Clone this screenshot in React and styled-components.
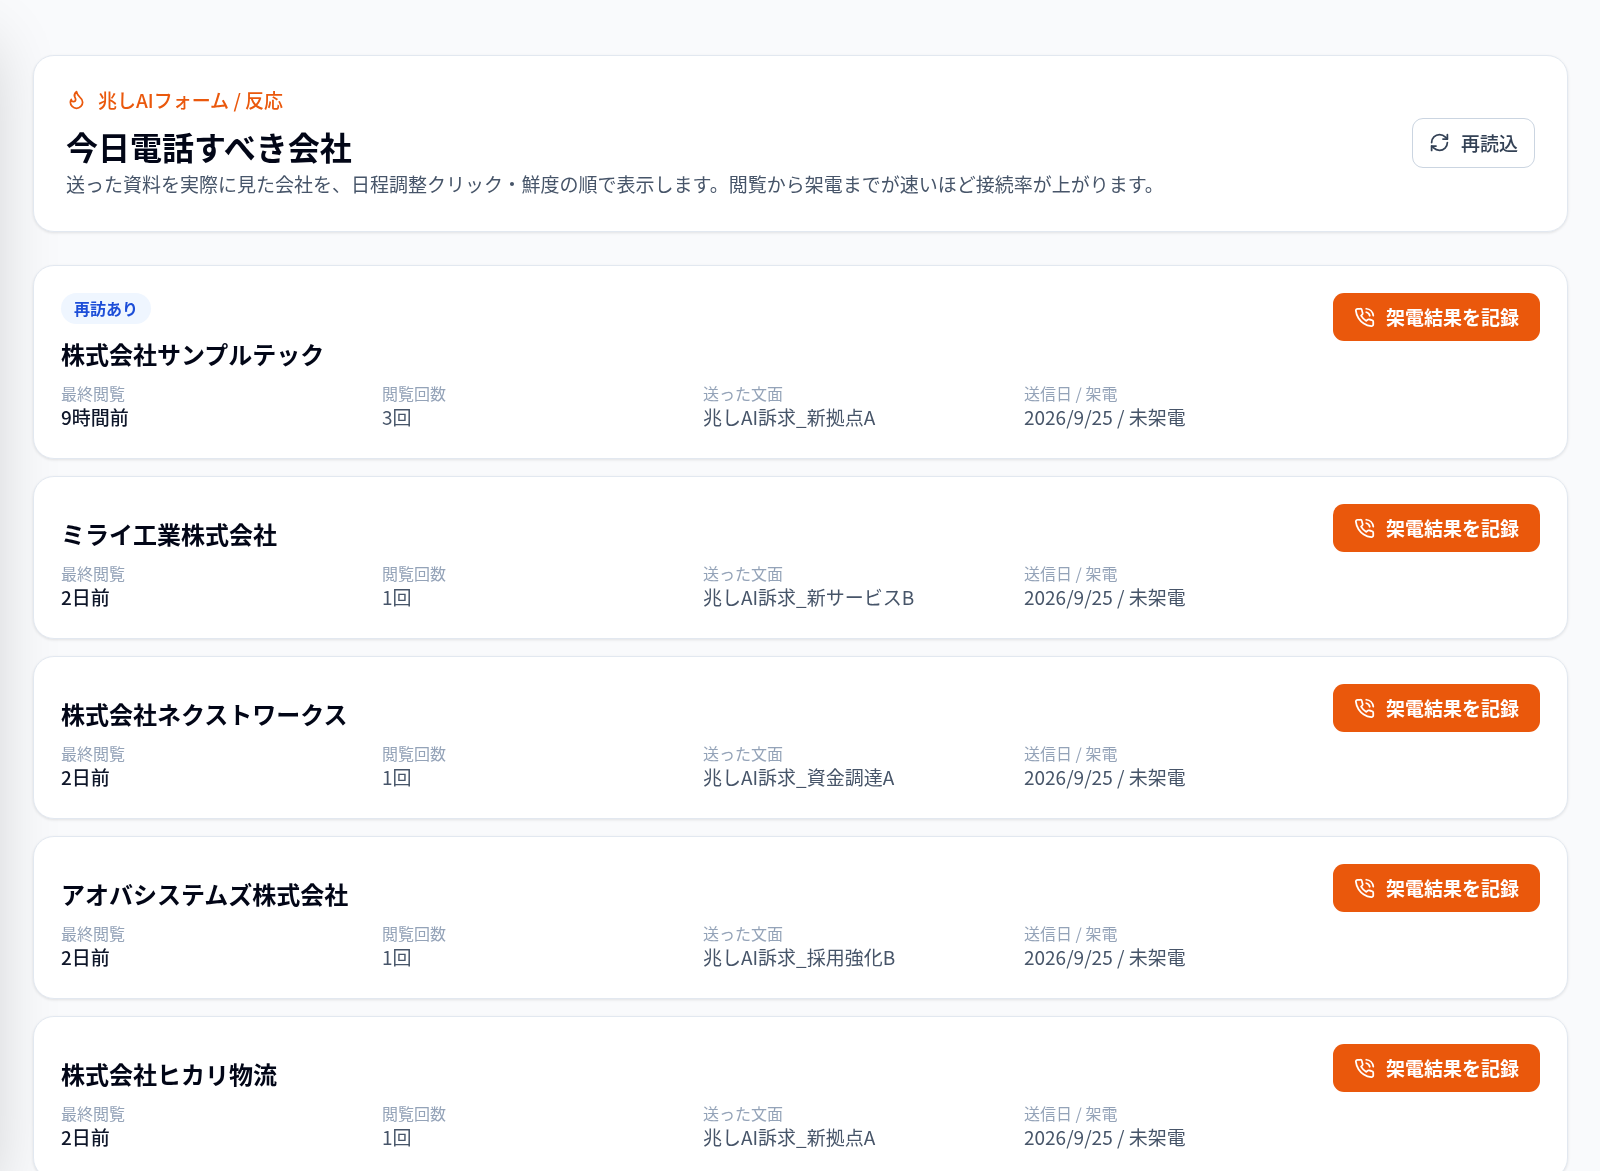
import React from 'react'
import styled, { createGlobalStyle } from 'styled-components'
import { RefreshCw } from 'lucide-react'

const companies = [
    { name: '株式会社サンプルテック', revisit: true, lastView: '9時間前', views: 3, template: '兆しAI訴求_新拠点A' },
    { name: 'ミライ工業株式会社', lastView: '2日前', views: 1, template: '兆しAI訴求_新サービスB' },
    { name: '株式会社ネクストワークス', lastView: '2日前', views: 1, template: '兆しAI訴求_資金調達A' },
    { name: 'アオバシステムズ株式会社', lastView: '2日前', views: 1, template: '兆しAI訴求_採用強化B' },
    { name: '株式会社ヒカリ物流', lastView: '2日前', views: 1, template: '兆しAI訴求_新拠点A' },
]

function FlameIcon() {
    return (
        <Icon viewBox="0 0 24 24" aria-hidden="true">
            <path d="M8.5 14.5A2.5 2.5 0 0 0 11 12c0-1.38-.5-2-1-3-1.072-2.143-.224-4.054 2-6 .5 2.5 2 4.9 4 6.5 2 1.6 3 3.5 3 5.5a7 7 0 1 1-14 0c0-1.153.433-2.294 1-3a2.5 2.5 0 0 0 2.5 2.5z" />
        </Icon>
    )
}

function PhoneCallIcon() {
    return (
        <Icon viewBox="0 0 24 24" aria-hidden="true">
            <path d="M22 16.92v3a2 2 0 0 1-2.18 2 19.79 19.79 0 0 1-8.63-3.07 19.5 19.5 0 0 1-6-6 19.79 19.79 0 0 1-3.07-8.67A2 2 0 0 1 4.11 2h3a2 2 0 0 1 2 1.72 12.84 12.84 0 0 0 .7 2.81 2 2 0 0 1-.45 2.11L8.09 9.91a16 16 0 0 0 6 6l1.27-1.27a2 2 0 0 1 2.11-.45 12.84 12.84 0 0 0 2.81.7A2 2 0 0 1 22 16.92z" />
            <path d="M14.05 2a9 9 0 0 1 8 7.94" />
            <path d="M14.05 6A5 5 0 0 1 18 10" />
        </Icon>
    )
}

function CompanyCard({ company }) {
    return (
        <Card>
            <CardBody>
                <Badges>{company.revisit && <Badge>再訪あり</Badge>}</Badges>
                <CompanyName>{company.name}</CompanyName>
                <Stats>
                    <div>
                        <Label>最終閲覧</Label>
                        <Value $strong>{company.lastView}</Value>
                    </div>
                    <div>
                        <Label>閲覧回数</Label>
                        <Value>{company.views}回</Value>
                    </div>
                    <div>
                        <Label>送った文面</Label>
                        <Value>{company.template}</Value>
                    </div>
                    <div>
                        <Label>送信日 / 架電</Label>
                        <Value>2026/9/25 / 未架電</Value>
                    </div>
                </Stats>
            </CardBody>
            <RecordButton type="button">
                <PhoneCallIcon />
                架電結果を記録
            </RecordButton>
        </Card>
    )
}

function App() {
    return (
        <>
            <GlobalStyle />
            <SidebarEdge />
            <Page>
                <Header>
                    <div>
                        <Eyebrow>
                            <FlameIcon />
                            兆しAIフォーム / 反応
                        </Eyebrow>
                        <Title>今日電話すべき会社</Title>
                        <Description>
                            送った資料を実際に見た会社を、日程調整クリック・鮮度の順で表示します。閲覧から架電までが速いほど接続率が上がります。
                        </Description>
                    </div>
                    <ReloadButton type="button">
                        <RefreshCw size={21} />
                        再読込
                    </ReloadButton>
                </Header>
                <List>
                    {companies.map((company) => (
                        <CompanyCard key={company.name} company={company} />
                    ))}
                </List>
            </Page>
        </>
    )
}

export default App

const GlobalStyle = createGlobalStyle`
    *{
        box-sizing: border-box;
        margin: 0;
        padding: 0;
    }
    html{
        overflow: hidden auto;
        scrollbar-width: none;
    }
    body{
        background: #f9fafc;
        color: #020617;
        font-family: "Noto Sans CJK JP", sans-serif;
        font-size: 19px;
        line-height: 26px;
    }
    button{
        font: inherit;
        cursor: pointer;
    }
    svg{
        flex-shrink: 0;
    }
`

const Icon = styled.svg`
    width: 21px;
    height: 21px;
    fill: none;
    stroke: currentColor;
    stroke-width: 2;
    stroke-linecap: round;
    stroke-linejoin: round;
`

// the collapsed sidebar sits off screen, only its shadow reaches the page
const SidebarEdge = styled.div`
    position: fixed;
    top: 0;
    bottom: 0;
    left: -340px;
    width: 340px;
    box-shadow: 0 33px 67px -12px rgba(0, 0, 0, 0.2);
`

const Page = styled.main`
    position: relative;
    padding: 55px 32px 32px 33px;
`

const Panel = styled.section`
    display: flex;
    background: white;
    border: 1px solid #e2e8f0;
    border-radius: 21px;
    box-shadow: 0 1px 3px rgba(0, 0, 0, 0.1);
`

const Header = styled(Panel)`
    align-items: center;
    justify-content: space-between;
    gap: 21px;
    padding: 32px 32px 34px;
`

const Eyebrow = styled.p`
    display: flex;
    align-items: center;
    gap: 11px;
    color: #ea580c;
    line-height: 23px;
    font-weight: 500;
`

const Title = styled.h1`
    margin: 14px 0 3px;
    font-size: 32px;
    line-height: 43px;
    font-weight: 700;
`

const Description = styled.p`
    color: #475569;
`

const ReloadButton = styled.button`
    display: flex;
    align-items: center;
    gap: 11px;
    flex-shrink: 0;
    padding: 11px 16px;
    background: white;
    color: #334155;
    border: 1px solid #cbd5e1;
    border-radius: 11px;
    font-weight: 500;
`

const List = styled.div`
    display: flex;
    flex-direction: column;
    gap: 17px;
    margin-top: 33px;
`

const Card = styled(Panel)`
    align-items: flex-start;
    gap: 16px;
    padding: 27px 27px 28px;
`

const CardBody = styled.div`
    flex: 1;
    min-width: 0;
`

const Badges = styled.div`
    display: flex;
`

const Badge = styled.span`
    padding: 5px 13px;
    background: #eff6ff;
    color: #1d4ed8;
    border-radius: 16px;
    font-size: 16px;
    line-height: 21px;
    font-weight: 700;
`

const CompanyName = styled.h2`
    margin: 11px 0;
    font-size: 24px;
    line-height: 37px;
    font-weight: 700;
`

const Stats = styled.dl`
    display: grid;
    grid-template-columns: repeat(4, minmax(0, 1fr));
    column-gap: 28px;
`

const Label = styled.dt`
    color: #94a3b8;
    font-size: 16px;
    line-height: 21px;
`

const Value = styled.dd`
    color: ${(props) => (props.$strong ? '#0f172a' : '#475569')};
    font-weight: ${(props) => (props.$strong ? 500 : 400)};
`

const RecordButton = styled.button`
    display: flex;
    align-items: center;
    gap: 11px;
    flex-shrink: 0;
    padding: 11px 21px;
    background: #ea580c;
    color: white;
    border: none;
    border-radius: 11px;
    font-weight: 700;
`
